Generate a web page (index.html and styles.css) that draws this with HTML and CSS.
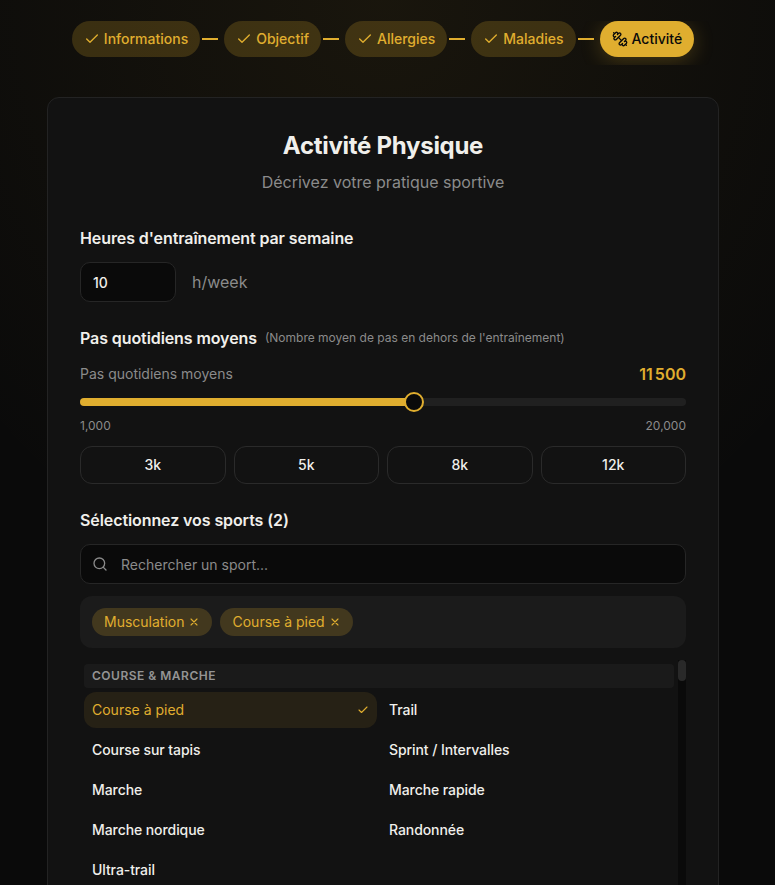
FILE: index.html
```html
<!DOCTYPE html>
<html lang="fr">
<head>
    <meta charset="UTF-8">
    <meta name="viewport" content="width=device-width, initial-scale=1.0">
    <title>Activité Physique</title>
    <link rel="stylesheet" href="styles.css">
</head>
<body>
    <svg class="icon-defs" aria-hidden="true">
        <symbol id="check" viewBox="0 0 24 24"><path d="M20 6 9 17l-5-5"/></symbol>
        <symbol id="close" viewBox="0 0 24 24"><path d="M18 6 6 18M6 6l12 12"/></symbol>
    </svg>

    <main class="page">
        <!-- Stepper -->
        <nav class="steps">
            <div class="step"><svg class="icon"><use href="#check"/></svg>Informations</div>
            <span class="step-line"></span>
            <div class="step"><svg class="icon"><use href="#check"/></svg>Objectif</div>
            <span class="step-line"></span>
            <div class="step"><svg class="icon"><use href="#check"/></svg>Allergies</div>
            <span class="step-line"></span>
            <div class="step"><svg class="icon"><use href="#check"/></svg>Maladies</div>
            <span class="step-line"></span>
            <div class="step active">
                <svg class="icon" viewBox="0 0 24 24">
                    <path d="M14.4 14.4 9.6 9.6"/>
                    <path d="M18.657 21.485a2 2 0 1 1-2.829-2.828l-1.767 1.768a2 2 0 1 1-2.829-2.829l6.364-6.364a2 2 0 1 1 2.829 2.829l-1.768 1.767a2 2 0 1 1 2.828 2.829z"/>
                    <path d="m21.5 21.5-1.4-1.4"/>
                    <path d="M3.9 3.9 2.5 2.5"/>
                    <path d="M6.404 12.768a2 2 0 1 1-2.829-2.829l1.768-1.767a2 2 0 1 1-2.828-2.829l2.828-2.828a2 2 0 1 1 2.829 2.828l1.767-1.768a2 2 0 1 1 2.829 2.829z"/>
                </svg>Activité
            </div>
        </nav>

        <section class="card">
            <header class="card-header">
                <h1 class="title">Activité Physique</h1>
                <p class="subtitle">Décrivez votre pratique sportive</p>
            </header>

            <!-- Training hours -->
            <div class="field">
                <label class="label" for="hours">Heures d'entraînement par semaine</label>
                <div class="hours">
                    <input class="input hours-input" id="hours" type="text" value="10">
                    <span class="unit">h/week</span>
                </div>
            </div>

            <!-- Daily steps -->
            <div class="field">
                <div class="label-row">
                    <span class="label">Pas quotidiens moyens</span>
                    <span class="hint">(Nombre moyen de pas en dehors de l'entraînement)</span>
                </div>
                <div class="slider-head">
                    <span class="slider-name">Pas quotidiens moyens</span>
                    <span class="slider-value"><span class="thousands">11</span>500</span>
                </div>
                <div class="slider">
                    <div class="slider-fill" style="width: 55.12%"></div>
                    <div class="slider-thumb" style="left: 55.12%"></div>
                </div>
                <div class="slider-range">
                    <span>1,000</span>
                    <span>20,000</span>
                </div>
                <div class="presets">
                    <button class="preset">3k</button>
                    <button class="preset">5k</button>
                    <button class="preset">8k</button>
                    <button class="preset">12k</button>
                </div>
            </div>

            <!-- Sports -->
            <div class="field">
                <span class="label">Sélectionnez vos sports (2)</span>
                <div class="input search">
                    <svg class="icon" viewBox="0 0 24 24"><circle cx="11" cy="11" r="8"/><path d="m21 21-4.3-4.3"/></svg>
                    <input class="search-input" type="text" placeholder="Rechercher un sport...">
                </div>
                <div class="chips">
                    <span class="chip">Musculation<svg class="icon"><use href="#close"/></svg></span>
                    <span class="chip">Course à pied<svg class="icon"><use href="#close"/></svg></span>
                </div>
                <div class="list">
                    <div class="list-content">
                        <div class="category">Course &amp; Marche</div>
                        <div class="sports">
                            <div class="sport selected">Course à pied<svg class="icon"><use href="#check"/></svg></div>
                            <div class="sport">Trail</div>
                            <div class="sport">Course sur tapis</div>
                            <div class="sport">Sprint / Intervalles</div>
                            <div class="sport">Marche</div>
                            <div class="sport">Marche rapide</div>
                            <div class="sport">Marche nordique</div>
                            <div class="sport">Randonnée</div>
                            <div class="sport">Ultra-trail</div>
                        </div>
                    </div>
                    <div class="scrollbar"><div class="scrollbar-thumb"></div></div>
                </div>
            </div>
        </section>
    </main>
</body>
</html>
```
FILE: styles.css
```css
* {
    margin: 0;
    padding: 0;
    box-sizing: border-box;
}

:root {
    --gold: #e0ae2f;
    --text: #f0efeb;
    --muted: #8b8b8b;
    --border: #262626;
    --input: #0a0a0a;
    --panel: #1b1b1b;
}

body {
    height: 100vh;
    overflow: hidden;
    font-family: Inter, sans-serif;
    font-size: 16px;
    line-height: 24px;
    color: var(--text);
    background: radial-gradient(ellipse 550px 620px at 383px 0, rgba(224, 174, 47, 0.07), transparent) #0a0a0a;
}

input,
button {
    font: inherit;
    color: inherit;
    background: none;
    border: none;
    outline: none;
}

.icon-defs {
    display: none;
}

.icon {
    width: 16px;
    height: 16px;
    flex-shrink: 0;
    fill: none;
    stroke: currentColor;
    stroke-width: 2;
    stroke-linecap: round;
    stroke-linejoin: round;
}

.page {
    width: 672px;
    height: 100%;
    margin-left: 47px;
    padding-top: 21px;
    overflow: hidden;
}

/* Stepper */
.steps {
    display: flex;
    align-items: center;
    justify-content: center;
    height: 44px;
    padding-bottom: 8px;
    margin-bottom: 32px;
    overflow: hidden;
}

.step {
    display: flex;
    align-items: center;
    gap: 4px;
    height: 36px;
    padding: 0 12px;
    border-radius: 18px;
    font-size: 14px;
    font-weight: 500;
    color: var(--gold);
    background: rgba(224, 174, 47, 0.2);
}

.step.active {
    color: #0a0a0a;
    background: var(--gold);
    box-shadow: 0 4px 20px rgba(224, 174, 47, 0.25);
}

.step-line {
    width: 16px;
    height: 2px;
    margin: 0 6px 0 2px;
    background: var(--gold);
}

/* Card */
.card {
    height: 1100px;
    padding: 32px;
    border: 1px solid #232323;
    border-radius: 12px;
    background: #121212;
}

.card-header {
    margin-bottom: 32px;
    text-align: center;
}

.title {
    font-size: 24px;
    line-height: 32px;
    font-weight: 700;
    letter-spacing: -0.28px;
}

.subtitle {
    margin-top: 8px;
    color: var(--muted);
}

.field {
    margin-bottom: 24px;
}

.label {
    display: block;
    font-weight: 600;
    letter-spacing: -0.09px;
}

/* Inputs */
.input {
    height: 40px;
    border: 1px solid var(--border);
    border-radius: 10px;
    background: var(--input);
    font-size: 14px;
}

.hours {
    display: flex;
    align-items: center;
    gap: 16px;
    margin-top: 12px;
}

.hours-input {
    width: 96px;
    padding: 1px 12px 0;
    font-weight: 500;
}

.unit {
    color: var(--muted);
}

/* Slider */
.label-row {
    display: flex;
    align-items: center;
    gap: 8px;
}

.hint {
    font-size: 12px;
    color: var(--muted);
}

.slider-head {
    display: flex;
    align-items: center;
    justify-content: space-between;
    margin-top: 12px;
}

.slider-name {
    font-size: 14px;
    color: var(--muted);
}

.slider-value {
    font-weight: 600;
    color: var(--gold);
}

.thousands {
    margin-right: 2px;
}

.slider {
    position: relative;
    height: 8px;
    margin: 12px 0;
    border-radius: 4px;
    background: #202020;
}

.slider-fill {
    height: 100%;
    border-radius: 4px 0 0 4px;
    background: var(--gold);
}

.slider-thumb {
    position: absolute;
    top: -6px;
    width: 20px;
    height: 20px;
    margin-left: -10px;
    border: 2px solid var(--gold);
    border-radius: 50%;
    background: var(--input);
}

.slider-range {
    display: flex;
    justify-content: space-between;
    font-size: 12px;
    line-height: 16px;
    color: var(--muted);
}

.presets {
    display: grid;
    grid-template-columns: repeat(4, 1fr);
    gap: 8px;
    margin-top: 12px;
}

.preset {
    height: 38px;
    border: 1px solid #2a2a2a;
    border-radius: 12px;
    font-size: 14px;
    font-weight: 500;
}

/* Sports */
.search {
    display: flex;
    align-items: center;
    gap: 13px;
    margin-top: 12px;
    padding: 0 11px;
    color: var(--muted);
}

.search-input {
    flex: 1;
    padding-top: 2px;
}

.search-input::placeholder {
    color: var(--muted);
}

.chips {
    display: flex;
    gap: 8px;
    margin-top: 12px;
    padding: 12px;
    border-radius: 12px;
    background: var(--panel);
}

.chip {
    display: flex;
    align-items: center;
    gap: 4px;
    height: 28px;
    padding: 0 12px;
    border-radius: 14px;
    font-size: 14px;
    color: var(--gold);
    background: rgba(224, 174, 47, 0.2);
}

.chip .icon,
.sport .icon {
    width: 12px;
    height: 12px;
    stroke-width: 2.2;
}

.list {
    display: flex;
    height: 400px;
    margin-top: 12px;
}

.list-content {
    flex: 1;
    padding: 4px;
}

.category {
    height: 24px;
    padding: 0 8px;
    border-radius: 4px;
    font-size: 12px;
    font-weight: 600;
    letter-spacing: 0.5px;
    text-transform: uppercase;
    color: #949494;
    background: #1a1a1a;
}

.sports {
    display: grid;
    grid-template-columns: 1fr 1fr;
    gap: 4px;
    margin-top: 4px;
}

.sport {
    display: flex;
    align-items: center;
    justify-content: space-between;
    height: 36px;
    padding: 0 8px;
    border-radius: 12px;
    font-size: 14px;
    font-weight: 500;
    letter-spacing: -0.08px;
}

.sport.selected {
    font-weight: 400;
    letter-spacing: 0;
    color: var(--gold);
    background: #262115;
}

.scrollbar {
    width: 8px;
    background: var(--input);
}

.scrollbar-thumb {
    height: 21px;
    border-radius: 4px;
    background: #292929;
}
```
